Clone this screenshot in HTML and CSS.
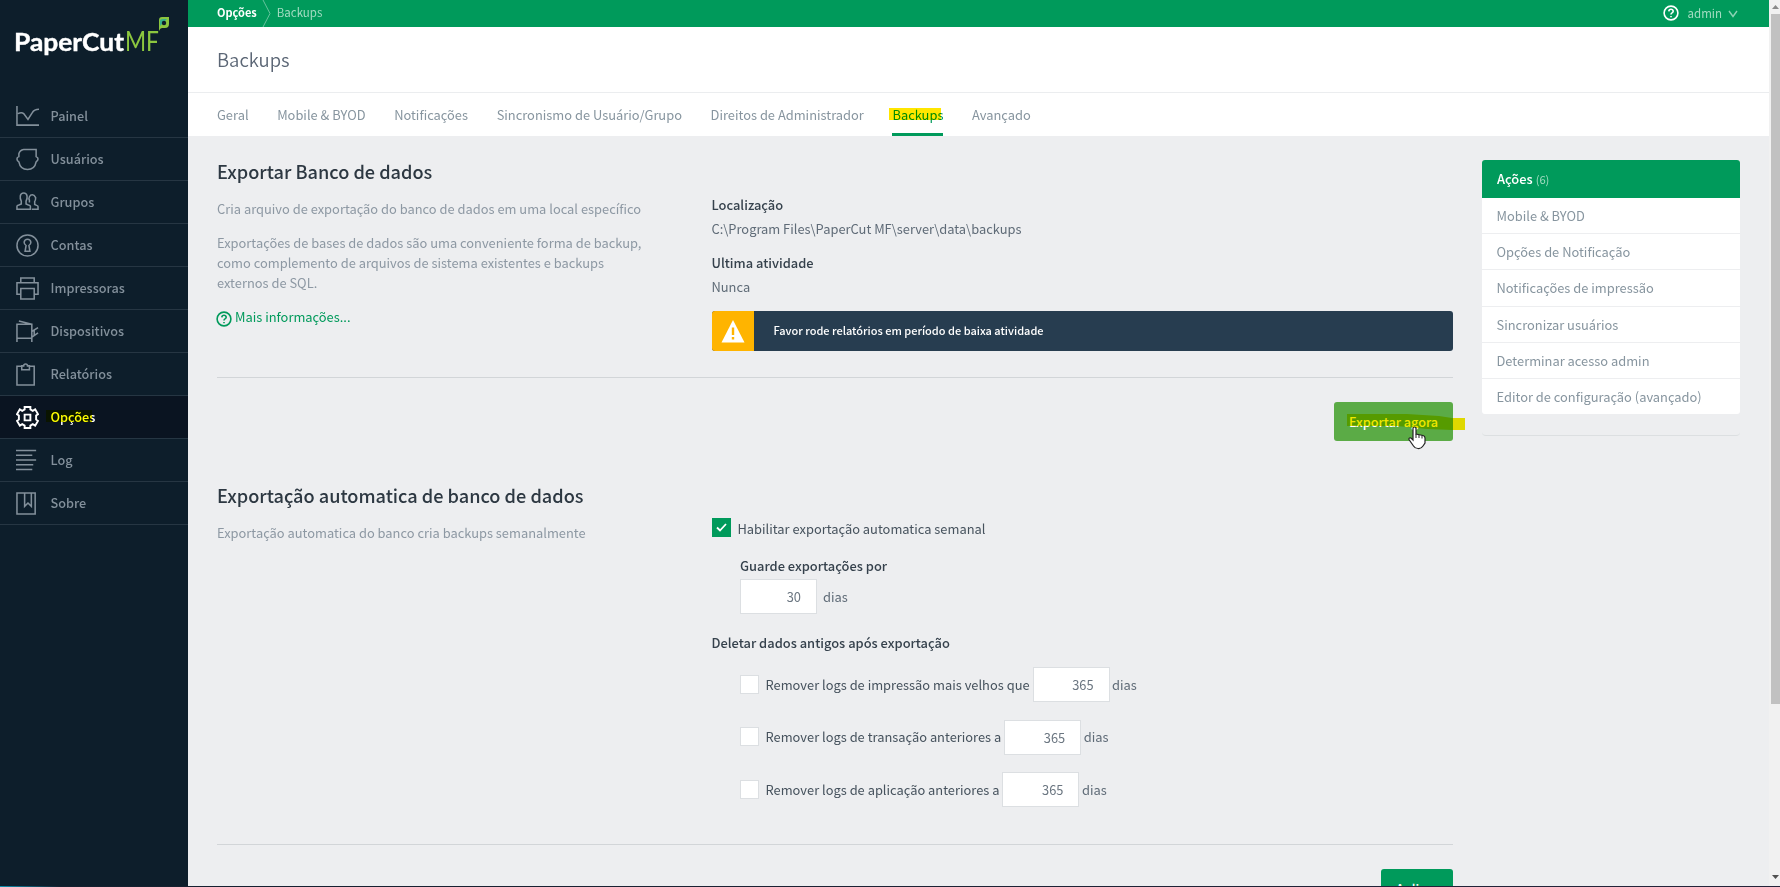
FILE: index.html
```html
<!DOCTYPE html>
<html lang="pt">
<head>
    <meta charset="utf-8">
    <title>PaperCut MF : Backups</title>
    <link rel="stylesheet" href="styles.css">
</head>
<body>
    <div class="app">
        <div class="sidebar">
            <div class="logo">
                <svg width="188" height="80" viewBox="0 0 188 80">
                    <text class="logo-name" x="14" y="51" textLength="110" lengthAdjust="spacingAndGlyphs">PaperCut</text>
                    <text class="logo-mf" x="125" y="51" textLength="34" lengthAdjust="spacingAndGlyphs">MF</text>
                </svg>
                <svg class="leaf" width="12" height="14" viewBox="0 0 12 14">
                    <path d="M1 14V3Q1 0 4 0H11V7Q11 11 7 11H4Q2 11 1 14Z" fill="#8cc63f"/>
                    <path d="M2 9V4Q2 2 5 2H9L3 8Z" fill="#35b08c"/>
                    <circle cx="6" cy="6" r="2.2" fill="#0d1e2b"/>
                </svg>
            </div>
            <ul class="menu">
                <li>
                    <svg class="icon" viewBox="0 0 24 24"><path d="M1 1V21H24M2 9Q6 7 8 9L12.500 15L17 8Q19 4.500 24 4.500"/></svg>
                    <span>Painel</span>
                </li>
                <li>
                    <svg class="icon" viewBox="0 0 24 24"><path d="M3 9V6Q4 2 8 1.500H21V9Q23 10 23 11.500T21 14.500Q19.500 22.500 12 22.500T3 14.500Q1 13.500 1 11.500T3 9Z"/></svg>
                    <span>Usuários</span>
                </li>
                <li>
                    <svg class="icon" viewBox="0 0 24 24"><path d="M1 19V16Q1 15 3 14.500L5.500 13.500V10.500Q4 8 4.500 5Q5 2 8 2T11.500 5Q12 8 10.500 10.500V13.500L13 14.500Q15 15 15 16V19ZM14 12V9.500Q13 8 14 6Q15 4 17 4T20.500 7Q20.500 10 19.500 11V14L21.500 15Q23 15.500 23 16.500V19H16.500"/></svg>
                    <span>Grupos</span>
                </li>
                <li>
                    <svg class="icon" viewBox="0 0 24 24"><circle cx="12" cy="12" r="11"/><path d="M9.500 18L10.500 12Q8.500 10.500 8.500 8.500Q9 5.500 12 5.500T15.500 8.500Q15.500 10.500 13.500 12L14.500 18Z"/></svg>
                    <span>Contas</span>
                </li>
                <li>
                    <svg class="icon" viewBox="0 0 24 24"><path d="M5 6V1H19V6M5 18H1V6H23V18H19M5 12H19V23H5Z"/></svg>
                    <span>Impressoras</span>
                </li>
                <li>
                    <svg class="icon" viewBox="0 0 24 24"><path d="M1 23V4.500H16.500V23M1 19H16.500M3 1L16.500 4.500M16.500 12L23 8M17 17.500L23 13.500M19 10.500V16"/></svg>
                    <span>Dispositivos</span>
                </li>
                <li>
                    <svg class="icon" viewBox="0 0 24 24"><path d="M6 3.500H1V23H19V3.500H14M6 3V7H14V3H12Q12 1 10 1T8 3Z"/></svg>
                    <span>Relatórios</span>
                </li>
                <li class="active">
                    <svg class="icon" viewBox="0 0 24 24"><path d="M9 1H15V3.500L17.500 5L20 3.500L23 8.500L21 10V14L23 15.500L20 20.500L17.500 19L15 20.500V23H9V20.500L6.500 19L4 20.500L1 15.500L3 14V10L1 8.500L4 3.500L6.500 5L9 3.500ZM9 9H15V15H9Z"/></svg>
                    <span class="menu-text">Opções<i class="marker marker-menu"></i></span>
                </li>
                <li>
                    <svg class="icon" viewBox="0 0 24 24"><path d="M0 1.500H21M0 6.500H17M0 11.500H21M0 16.500H18M0 21.500H17"/></svg>
                    <span>Log</span>
                </li>
                <li>
                    <svg class="icon" viewBox="0 0 24 24"><path d="M1 1H20V23H1ZM9 1V15L12.500 11.500L16 15V1"/></svg>
                    <span>Sobre</span>
                </li>
            </ul>
        </div>

        <div class="main">
            <div class="topbar">
                <b>Opções</b>
                <svg class="crumb-arrow" width="9" height="27" viewBox="0 0 9 27"><path d="M1 0L8 13.500L1 27"/></svg>
                <span class="crumb">Backups</span>
                <div class="user">
                    <svg class="help" width="16" height="16" viewBox="0 0 16 16"><circle cx="8" cy="8" r="6.900"/><path d="M5.800 6.300Q6 4.300 8 4.300T10.200 6.200Q10.200 7.200 9 7.900Q8 8.400 8 9.600M8 10.900V12.300"/></svg>
                    <span>admin</span>
                    <svg class="caret" width="10" height="8" viewBox="0 0 10 8"><path d="M1 1L5 6.500L9 1"/></svg>
                </div>
            </div>
            <div class="title">Backups</div>
            <div class="tabs">
                <a>Geral</a>
                <a>Mobile &amp; BYOD</a>
                <a>Notificações</a>
                <a>Sincronismo de Usuário/Grupo</a>
                <a>Direitos de Administrador</a>
                <a class="current">Backups<i class="marker marker-tab"></i></a>
                <a>Avançado</a>
            </div>

            <div class="content">
                <div class="sections">
                    <div class="section">
                        <div class="info">
                            <h2>Exportar Banco de dados</h2>
                            <p>Cria arquivo de exportação do banco de dados em uma local específico</p>
                            <p>Exportações de bases de dados são uma conveniente forma de backup,<br>como complemento de arquivos de sistema existentes e backups<br>externos de SQL.</p>
                            <a class="more">
                                <svg class="help" width="16" height="16" viewBox="0 0 16 16"><circle cx="8" cy="8" r="6.900"/><path d="M5.800 6.300Q6 4.300 8 4.300T10.200 6.200Q10.200 7.200 9 7.900Q8 8.400 8 9.600M8 10.900V12.300"/></svg>
                                <span>Mais informações...</span>
                            </a>
                        </div>
                        <div class="fields">
                            <div class="label">Localização</div>
                            <div class="value">C:\Program Files\PaperCut MF\server\data\backups</div>
                            <div class="label">Ultima atividade</div>
                            <div class="value">Nunca</div>
                            <div class="alert">
                                <div class="alert-icon">
                                    <svg width="24" height="24" viewBox="0 0 24 24"><path d="M12 1L23.500 23.500H.5Z" fill="#fff"/><path d="M12 8.500V16M12 18V20.500" stroke="#ffb400" stroke-width="2.400"/></svg>
                                </div>
                                <span>Favor rode relatórios em período de baixa atividade</span>
                            </div>
                        </div>
                    </div>
                    <div class="buttons">
                        <button class="btn btn-export">Exportar agora
                            <svg class="marker marker-export" width="120" height="20" viewBox="0 0 120 20"><path d="M0 0H60L92 2L105 4H118V16H105L80 15L50 12H0Z" fill="#f0e800"/></svg>
                            <svg class="pointer" width="18" height="24" viewBox="0 0 18 24"><path d="M5 2.500Q5 1 6.500 1T8 2.500V8L15 9.500Q17 10 17 12V17L15 20Q13 23 10 22.500Q7 22.500 5.500 20L1 13.500Q.5 11.500 3 12L5 14Z" fill="#fff" stroke="#222" stroke-width="1.200"/><path d="M8 8V12M11 9V12M14 9.500V12.500" stroke="#222" fill="none"/></svg>
                        </button>
                    </div>

                    <div class="section section-auto">
                        <div class="info">
                            <h2>Exportação automatica de banco de dados</h2>
                            <p>Exportação automatica do banco cria backups semanalmente</p>
                        </div>
                        <div class="fields">
                            <div class="check-row">
                                <span class="check checked"><svg width="11" height="9" viewBox="0 0 11 9"><path d="M1 4.500L4 7.500L10 1"/></svg></span>
                                <span class="check-text">Habilitar exportação automatica semanal</span>
                            </div>
                            <div class="keep">
                                <div class="label">Guarde exportações por</div>
                                <div class="days"><input type="text" value="30"><span>dias</span></div>
                            </div>
                            <div class="label">Deletar dados antigos após exportação</div>
                            <div class="removals">
                                <div class="removal"><span class="check"></span><span>Remover logs de impressão mais velhos que</span><input type="text" value="365"><em>dias</em></div>
                                <div class="removal"><span class="check"></span><span>Remover logs de transação anteriores a</span><input type="text" value="365"><em>dias</em></div>
                                <div class="removal"><span class="check"></span><span>Remover logs de aplicação anteriores a</span><input type="text" value="365"><em>dias</em></div>
                            </div>
                        </div>
                    </div>
                    <div class="buttons">
                        <button class="btn btn-apply">Aplicar</button>
                    </div>
                </div>

                <div class="aside">
                    <div class="actions">
                        <div class="actions-head">Ações <small>(6)</small></div>
                        <a>Mobile &amp; BYOD</a>
                        <a>Opções de Notificação</a>
                        <a>Notificações de impressão</a>
                        <a>Sincronizar usuários</a>
                        <a>Determinar acesso admin</a>
                        <a>Editor de configuração (avançado)</a>
                    </div>
                    <div class="actions-end"></div>
                </div>
            </div>
        </div>

        <div class="scrollbar">
            <svg width="11" height="14" viewBox="0 0 11 14"><path d="M3 9L6.500 5L10 9Z" fill="#8a8a8a"/></svg>
            <div class="thumb"></div>
            <svg class="down" width="11" height="14" viewBox="0 0 11 14"><path d="M3 3L6.500 7L10 3Z" fill="#505050"/></svg>
        </div>
    </div>
    <div class="edge"></div>
</body>
</html>
```
FILE: styles.css
```css
* {
    box-sizing: border-box;
}

body {
    margin: 0;
    height: 887px;
    overflow: hidden;
    font-family: "Noto Sans CJK JP", "Noto Sans", sans-serif;
    font-size: 12.88px;
    line-height: 20px;
    color: #5f6b77;
    background-color: #edeef0;
}

.app {
    display: flex;
    height: 886px;
    overflow: hidden;
}

.edge {
    height: 1px;
    background: linear-gradient(90deg, #0c8fae 0, #14202f 60px, #25243a 100%);
}

h2, p, ul {
    margin: 0;
    padding: 0;
}

/* sidebar */
.sidebar {
    flex: none;
    width: 188px;
    background-color: #0d1e2b;
}

.logo {
    position: relative;
    height: 95px;
}

.logo-name {
    font-family: Lato, sans-serif;
    font-weight: bold;
    font-size: 25px;
    fill: #fff;
    stroke: #fff;
    stroke-width: 0.4;
}

.logo-mf {
    font-family: Lato, sans-serif;
    font-size: 26px;
    fill: #8cc63f;
}

.leaf {
    position: absolute;
    left: 158px;
    top: 17px;
}

.menu {
    list-style: none;
}

.menu li {
    display: flex;
    align-items: center;
    height: 43px;
    padding-left: 16px;
    border-bottom: 1px solid #263643;
    color: #83909b;
    font-size: 12.7px;
    font-weight: 500;
}

.menu li.active {
    background-color: #0a1421;
    color: #fff;
}

.icon {
    width: 23px;
    height: 23px;
    margin-right: 11.5px;
    fill: none;
    stroke: currentColor;
    stroke-width: 1.6;
}

.active .icon {
    stroke-width: 2;
}

.menu-text {
    position: relative;
}

.marker {
    position: absolute;
    background-color: #ffe600;
    mix-blend-mode: multiply;
}

.marker-menu {
    left: -5px;
    top: 3px;
    width: 46px;
    height: 12px;
    background-color: #ffff00;
}

/* header */
.main {
    flex: 1;
    display: flex;
    flex-direction: column;
}

.topbar {
    flex: none;
    display: flex;
    align-items: center;
    height: 27px;
    padding: 0 31px 0 29px;
    background-color: #009a5b;
    color: #a3dcc2;
    font-size: 11.5px;
}

.topbar b {
    color: #fff;
    font-size: 11px;
    line-height: 16px;
    margin-bottom: 3px;
}

.crumb, .user span {
    margin-bottom: 3px;
}

.crumb-arrow {
    margin: 0 6px 0 5px;
    fill: none;
    stroke: #66c29d;
}

.user {
    display: flex;
    align-items: center;
    margin-left: auto;
}

.user span {
    margin-left: 9px;
    margin-right: 6px;
    margin-bottom: 2px;
}

.help {
    fill: none;
    stroke: currentColor;
    stroke-width: 1.6;
}

.user .help {
    margin-bottom: 1px;
    color: #fff;
}

.caret {
    fill: none;
    stroke: #8dd3b5;
    stroke-width: 1.4;
}

.title {
    flex: none;
    height: 66px;
    padding: 18px 29px;
    background-color: #fff;
    border-bottom: 1px solid #ebedef;
    font-size: 18.5px;
    font-weight: 350;
    color: #5b6675;
    line-height: 28px;
}

.tabs {
    flex: none;
    display: flex;
    gap: 28.6px;
    height: 43px;
    padding-left: 29px;
    background-color: #fff;
    color: #87959f;
}

.tabs a {
    position: relative;
    padding-top: 10px;
    line-height: 24px;
    height: 43px;
    white-space: nowrap;
}

.tabs .current {
    color: #009a5b;
    border-bottom: 3px solid #009a5b;
}

.marker-tab {
    left: -3px;
    top: 15px;
    width: 52px;
    height: 12px;
}

/* content */
.content {
    display: flex;
    gap: 29px;
    padding: 24px 29px 0;
}

.sections {
    width: 1236px;
}

.section {
    display: grid;
    grid-template-columns: 494.5px 741.5px;
    height: 218px;
    border-bottom: 1px solid #d2d5d8;
}

h2 {
    font-size: 18.15px;
    font-weight: 500;
    line-height: 26px;
    margin: -2px 0 15px;
    color: #2d3842;
}

.info p {
    margin-bottom: 14px;
    color: #8d98a3;
    white-space: nowrap;
}

.more {
    display: flex;
    gap: 2px;
    color: #009a5b;
}

.more .help {
    margin-top: 4px;
    margin-left: -1px;
    margin-right: 1px;
}

.label {
    font-weight: 500;
    color: #35414c;
}

.fields {
    padding-top: 35px;
}

.value {
    margin: 4px 0 14px;
}

.alert {
    display: flex;
    height: 40px;
    margin-top: 14px;
    border-radius: 3px;
    overflow: hidden;
    background-color: #273d50;
    color: #fff;
    font-size: 11px;
    font-weight: 500;
    line-height: 38px;
}

.alert-icon {
    display: flex;
    align-items: center;
    justify-content: center;
    width: 42px;
    margin-right: 20px;
    background-color: #ffb400;
}

.buttons {
    display: flex;
    justify-content: flex-end;
    padding-top: 24px;
}

.btn {
    position: relative;
    height: 39px;
    padding: 0 0 1px;
    border: 0;
    border-radius: 3px;
    background-color: #009a5b;
    color: #fff;
    font-family: inherit;
    font-size: 12.7px;
    font-weight: 500;
}

.btn-export {
    width: 119px;
    background-color: #5bab46;
}

.btn-apply {
    width: 72px;
}

.marker-export {
    left: 13px;
    top: 12px;
    background: none;
}

.pointer {
    position: absolute;
    left: 74px;
    top: 24px;
}

.section-auto {
    height: 361px;
    margin-top: 43px;
}

.section-auto .fields {
    padding-top: 34px;
}

.check-row {
    display: flex;
    gap: 7px;
    height: 20px;
}

.check {
    flex: none;
    display: flex;
    align-items: center;
    justify-content: center;
    width: 19px;
    height: 19px;
    border: 1px solid #dcdfe2;
    background-color: #fff;
}

.check.checked {
    border-color: #009a5b;
    background-color: #009a5b;
    fill: none;
    stroke: #fff;
    stroke-width: 1.8;
}

.check-text {
    margin-top: 1px;
    color: #46525d;
}

.keep {
    margin: 18px 0 17px 28.5px;
}

.days {
    display: flex;
    gap: 6px;
    margin-top: 3px;
    line-height: 36px;
}

input {
    width: 77px;
    height: 35px;
    padding: 0 15px 0 0;
    border: 1px solid #dcdfe2;
    background-color: #fff;
    font-family: inherit;
    font-size: 12.88px;
    text-align: right;
    color: #6b7681;
}

.keep + .label {
    padding-top: 1px;
}

.removals {
    display: grid;
    gap: 17.5px;
    margin: 14px 0 0 28.5px;
}

.removal {
    display: flex;
    align-items: center;
    height: 35px;
    color: #46525d;
}

.removal .check {
    margin: 0 6.5px 1px 0;
}

.removal input {
    margin: 0 2.5px 0 3px;
}

.removal em {
    font-style: normal;
    color: #5f6b77;
}

/* actions */
.aside {
    width: 258px;
}

.actions {
    overflow: hidden;
    border-radius: 3px;
    background-color: #fff;
}

.actions-head {
    height: 38px;
    padding: 9px 15px;
    background-color: #009a5b;
    color: #fff;
    font-weight: 500;
}

.actions-head small {
    font-size: 11.2px;
    font-weight: normal;
    color: #a3dcc2;
}

.actions a {
    display: block;
    height: 36.2px;
    padding: 8px 14.5px 0;
    border-bottom: 1px solid #edeef0;
    color: #87959f;
}

.actions a:last-child {
    height: 35px;
    border: 0;
}

.actions-end {
    height: 22px;
    border-bottom: 1px solid #dcdfe1;
    border-radius: 4px;
}

/* scrollbar */
.scrollbar {
    display: flex;
    flex-direction: column;
    width: 11px;
    background-color: #f1f1f1;
}

.thumb {
    width: 9px;
    height: 690px;
    margin-left: 2px;
    background-color: #c1c1c1;
}

.down {
    margin-top: auto;
}
```
